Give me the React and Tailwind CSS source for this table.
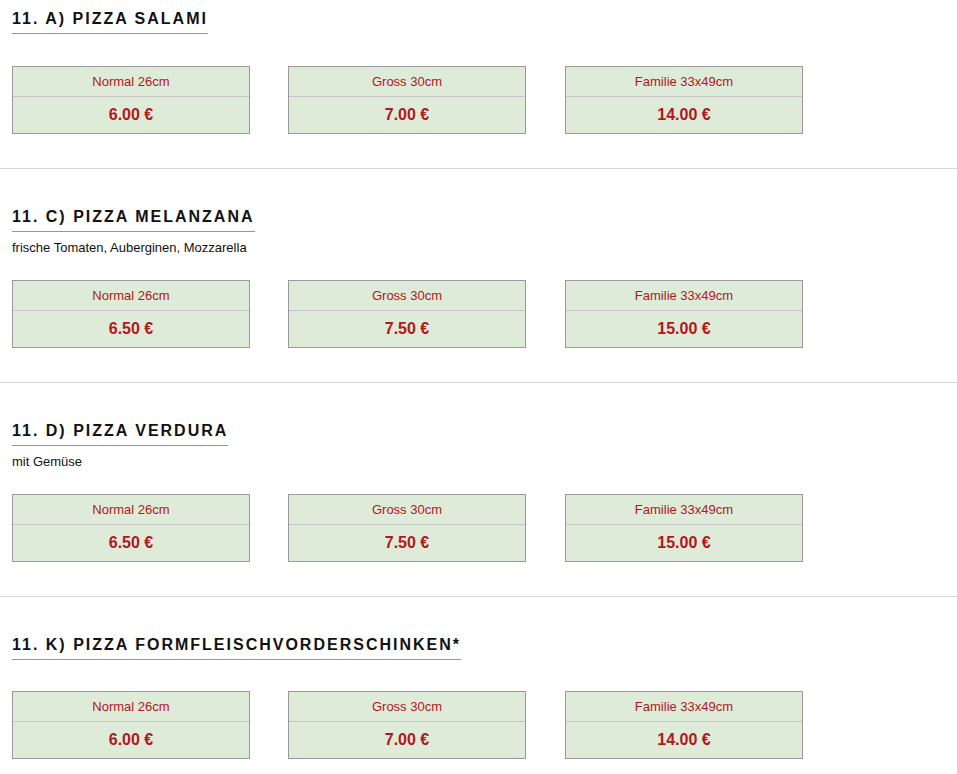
const sizes = ["Normal 26cm", "Gross 30cm", "Familie 33x49cm"];

const pizzas = [
  { title: "11. A) Pizza Salami", prices: ["6.00", "7.00", "14.00"] },
  {
    title: "11. C) Pizza Melanzana",
    desc: "frische Tomaten, Auberginen, Mozzarella",
    prices: ["6.50", "7.50", "15.00"],
  },
  { title: "11. D) Pizza Verdura", desc: "mit Gemüse", prices: ["6.50", "7.50", "15.00"] },
  { title: "11. K) Pizza Formfleischvorderschinken*", prices: ["6.00", "7.00", "14.00"] },
];

function PriceBox({ size, price, className = "" }) {
  return (
    <div className={`w-[238px] border border-[#999999] bg-[#deebd8] text-center text-[#b3161c] ${className}`}>
      <div className="flex h-[29px] items-center justify-center text-[13px]">{size}</div>
      <div className="flex h-[37px] items-center justify-center border-t border-[#c4c4c4] text-[16px] font-bold">
        {price} €
      </div>
    </div>
  );
}

function PizzaSection({ pizza, first }) {
  const rowGap = pizza.desc ? "mt-[25px]" : first ? "mt-[32px]" : "mt-[31px]";
  return (
    <section className={`border-b border-[#d6d6d6] px-3 pb-[34px] ${first ? "pt-[9px]" : "pt-[38px]"}`}>
      <div className="flex">
        <h2 className="border-b border-[#80a877] pb-[4px] text-[16px] font-bold uppercase leading-[20px] tracking-[2px] text-[#111111]">
          {pizza.title}
        </h2>
      </div>
      {pizza.desc && <p className="mt-[8px] text-[13px] leading-[15px] text-[#111111]">{pizza.desc}</p>}
      <div className={`flex ${rowGap}`}>
        <PriceBox size={sizes[0]} price={pizza.prices[0]} />
        <PriceBox size={sizes[1]} price={pizza.prices[1]} className="ml-[38px]" />
        <PriceBox size={sizes[2]} price={pizza.prices[2]} className="ml-[39px]" />
      </div>
    </section>
  );
}

export default function App() {
  return (
    <div className="min-h-screen bg-white font-['Liberation_Sans',Arial,sans-serif]">
      {pizzas.map((pizza, i) => (
        <PizzaSection key={pizza.title} pizza={pizza} first={i === 0} />
      ))}
    </div>
  );
}
